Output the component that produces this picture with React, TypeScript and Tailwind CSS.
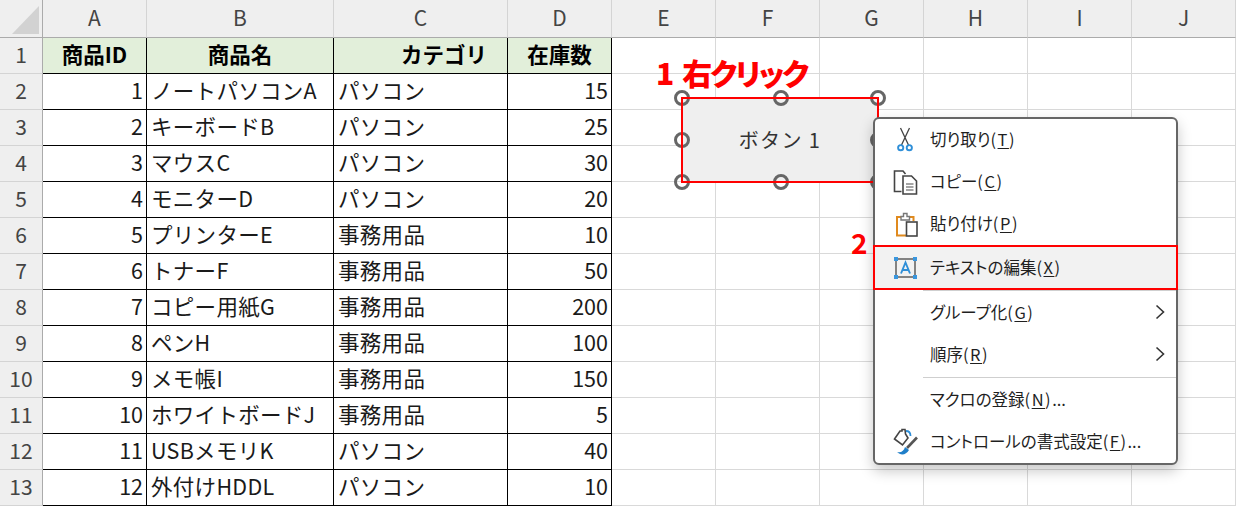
import React from "react";

const rows: [number, string, string, number][] = [
  [1, "ノートパソコンA", "パソコン", 15],
  [2, "キーボードB", "パソコン", 25],
  [3, "マウスC", "パソコン", 30],
  [4, "モニターD", "パソコン", 20],
  [5, "プリンターE", "事務用品", 10],
  [6, "トナーF", "事務用品", 50],
  [7, "コピー用紙G", "事務用品", 200],
  [8, "ペンH", "事務用品", 100],
  [9, "メモ帳I", "事務用品", 150],
  [10, "ホワイトボードJ", "事務用品", 5],
  [11, "USBメモリK", "パソコン", 40],
  [12, "外付けHDDL", "パソコン", 10],
];

const colHead = "flex items-center justify-center bg-[#efefef] border-r border-[#d4d4d4] border-b-[#ababab] border-b text-[#444] text-[21px] leading-none pb-[3px]";
const rowHead = "flex items-center justify-center bg-[#efefef] border-b border-b-[#d4d4d4] border-r border-r-[#ababab] text-[#444] text-[21px] leading-none pb-[3px]";
const blank = "border-r border-b border-[#d9d9d9] bg-white";
const body = "flex items-center border-r border-b border-black bg-white text-[21.5px] leading-none text-[#1a1a1a] whitespace-nowrap pb-[3px]";
const head = "flex items-center bg-[#e2efda] border-r border-b border-black text-[21.5px] leading-none font-bold text-black pb-[3px]";

function Handle() {
  return <div className="w-[16px] h-[16px] rounded-full border-[3px] border-[#666]" />;
}

function MenuItem({ icon, label, u, rest, arrow, hot }: { icon?: React.ReactNode; label: string; u: string; rest?: string; arrow?: boolean; hot?: boolean }) {
  return (
    <div className={hot ? "flex items-center h-[45px] -mx-[2px] pl-[18px] pr-[10px] bg-[#f2f2f2] border-2 border-[#ff0000]" : "flex items-center h-[42px] pl-[18px] pr-[10px]"}>
      <div className="w-[37px] h-[30px] flex items-center justify-start shrink-0">{icon}</div>
      <div className="text-[16.5px] leading-none text-[#1f1f1f] whitespace-nowrap pb-[1px] [font-feature-settings:'palt']">
        {label}
        <span className="tracking-[1.5px]">
          (<span className="underline underline-offset-2">{u}</span>)
        </span>
        {rest}
      </div>
      {arrow && (
        <svg className="ml-auto mb-[3px]" width="12" height="16" viewBox="0 0 12 16" fill="none" stroke="#333" strokeWidth="1.6">
          <path d="M2.5 1.5 L9.5 8 L2.5 14.5" />
        </svg>
      )}
    </div>
  );
}

const Scissors = (
  <svg width="25" height="26" viewBox="0 0 25 26" fill="none">
    <path d="M7.5 1 L15.5 18 M16.5 1 L8.5 18" stroke="#444" strokeWidth="1.3" />
    <circle cx="7.7" cy="20.7" r="2.6" stroke="#2f8fd8" strokeWidth="1.9" />
    <circle cx="16.3" cy="20.7" r="2.6" stroke="#2f8fd8" strokeWidth="1.9" />
  </svg>
);
const CopyIcon = (
  <svg width="25" height="25" viewBox="0 0 25 25" fill="none">
    <path d="M8.5 21.5 H1.5 V1 H10 L12.5 4" stroke="#444" strokeWidth="1.6" />
    <path d="M10 6 H18.5 L23.5 11 V24 H10 Z" fill="#fff" stroke="#444" strokeWidth="1.6" />
    <path d="M13 14 H20.5 M13 17 H20.5 M13 20 H20.5" stroke="#888" strokeWidth="1.4" />
  </svg>
);
const PasteIcon = (
  <svg width="25" height="25" viewBox="0 0 25 25" fill="none" className="ml-[2px]">
    <path d="M11 23.5 H2 V5 H18.5 V9" stroke="#e08a1e" strokeWidth="2" />
    <path d="M6 8 H14.5 V4.5 H12 V1.5 H8.5 V4.5 H6 Z" fill="#fff" stroke="#777" strokeWidth="1.4" />
    <rect x="11.5" y="10" width="10.5" height="14" fill="#fff" stroke="#444" strokeWidth="1.6" />
  </svg>
);
const TextBoxIcon = (
  <svg width="25" height="24" viewBox="0 0 25 24" fill="none">
    <rect x="3" y="3" width="19" height="18" stroke="#555" strokeWidth="1.4" />
    <rect x="1" y="1" width="4" height="4" fill="#3a96dd" />
    <rect x="20" y="1" width="4" height="4" fill="#3a96dd" />
    <rect x="1" y="19" width="4" height="4" fill="#3a96dd" />
    <rect x="20" y="19" width="4" height="4" fill="#3a96dd" />
    <path d="M8 17.5 L12.5 6.5 L17 17.5 M9.5 14 H15.5" stroke="#2f8fd8" strokeWidth="1.9" />
  </svg>
);
const FormatIcon = (
  <svg width="25" height="29" viewBox="0 0 25 29" fill="none">
    <path d="M1.5 11 L7 3 L9 3 L9 1.5 L12 1.5 L12.5 6 L15 10 L9.5 17 Z" stroke="#444" strokeWidth="1.6" fill="#fff" />
    <path d="M13 3 C16 3 17.5 5 17.5 8" stroke="#2f8fd8" strokeWidth="1.8" />
    <path d="M24 9.5 L14 20" stroke="#555" strokeWidth="2.6" />
    <path d="M4 24 C8 25 11 23 12 19 L16 22 C13 27 8 28 4 24 Z" fill="#1f7fc9" />
  </svg>
);

export default function App() {
  const blanks = Array.from({ length: 6 });
  return (
    <div className="relative w-[1236px] h-[506px] overflow-hidden bg-white" style={{ fontFamily: '"Noto Sans CJK JP", "Noto Sans", sans-serif' }}>
      <div className="grid grid-cols-[43px_104px_187px_174px_repeat(7,104px)] grid-rows-[38px_repeat(13,36px)]">
        <div className="bg-[#efefef] border-r border-b border-[#ababab]">
          <svg width="42" height="37"><path d="M12 34 H39 V6 Z" fill="#d2d2d2" /></svg>
        </div>
        {"ABCDEFGHIJ".split("").map((c) => (
          <div key={c} className={colHead}>{c}</div>
        ))}

        <div className={rowHead}>1</div>
        <div className={head + " justify-center"}>商品ID</div>
        <div className={head + " justify-center"}>商品名</div>
        <div className={head + " justify-end pr-[20px]"}>カテゴリ</div>
        <div className={head + " justify-center"}>在庫数</div>
        {blanks.map((_, i) => <div key={i} className={blank} />)}

        {rows.map((r, i) => (
          <React.Fragment key={i}>
            <div className={rowHead}>{i + 2}</div>
            <div className={body + " justify-end pr-[3px]"}>{r[0]}</div>
            <div className={body + " pl-[4px] tracking-[0.3px]"}>{r[1]}</div>
            <div className={body + " pl-[4px] tracking-[0.3px]"}>{r[2]}</div>
            <div className={body + " justify-end pr-[3px]"}>{r[3]}</div>
            {blanks.map((_, j) => <div key={j} className={blank} />)}
          </React.Fragment>
        ))}
      </div>

      <div className="absolute left-[656px] top-[50px] text-[30px] leading-[44px] font-black text-[#ff0000] whitespace-nowrap tracking-[-2px] [font-feature-settings:'palt']">
        <span className="mr-[5px]">1 </span>右クリック
      </div>
      <div className="absolute left-[851px] top-[222px] text-[28px] leading-[40px] font-bold text-[#ff0000]">2</div>

      {/* selected shape: handles sit on a 3x3 grid around the button */}
      <div className="absolute left-[674px] top-[90px] w-[212px] h-[100px] grid grid-cols-[99px_97px_16px] grid-rows-[16px_1fr_16px] items-center">
        <div className="col-start-1 col-end-4 row-start-1 row-end-4 mx-[8px] h-[84px] bg-[#efefef] flex items-center justify-center text-[20px] tracking-[1.4px] text-[#333] pb-[1px]">ボタン 1</div>
        <div className="col-start-1 row-start-1"><Handle /></div>
        <div className="col-start-2 row-start-1"><Handle /></div>
        <div className="col-start-3 row-start-1"><Handle /></div>
        <div className="col-start-1 row-start-2"><Handle /></div>
        <div className="col-start-3 row-start-2"><Handle /></div>
        <div className="col-start-1 row-start-3"><Handle /></div>
        <div className="col-start-2 row-start-3"><Handle /></div>
        <div className="col-start-3 row-start-3"><Handle /></div>
        <div className="col-start-1 col-end-4 row-start-1 row-end-4 mx-[7px] h-[86px] border-2 border-[#ff0000]" />
      </div>

      <div className="absolute left-[873px] top-[117px] w-[305px] h-[348px] bg-white border-2 border-[#666] rounded-[6px] shadow-[0_6px_14px_rgba(0,0,0,0.22)]">
        <MenuItem icon={Scissors} label="切り取り" u="T" />
        <MenuItem icon={CopyIcon} label="コピー" u="C" />
        <MenuItem icon={PasteIcon} label="貼り付け" u="P" />
        <MenuItem icon={TextBoxIcon} label="テキストの編集" u="X" hot />
        <div className="h-[1px] mb-[1px] ml-[48px] bg-[#cfcfcf]" />
        <MenuItem label="グループ化" u="G" arrow />
        <MenuItem label="順序" u="R" arrow />
        <div className="h-[1px] my-[1px] ml-[48px] bg-[#cfcfcf]" />
        <MenuItem label="マクロの登録" u="N" rest="..." />
        <MenuItem icon={FormatIcon} label="コントロールの書式設定" u="F" rest="..." />
      </div>
    </div>
  );
}
